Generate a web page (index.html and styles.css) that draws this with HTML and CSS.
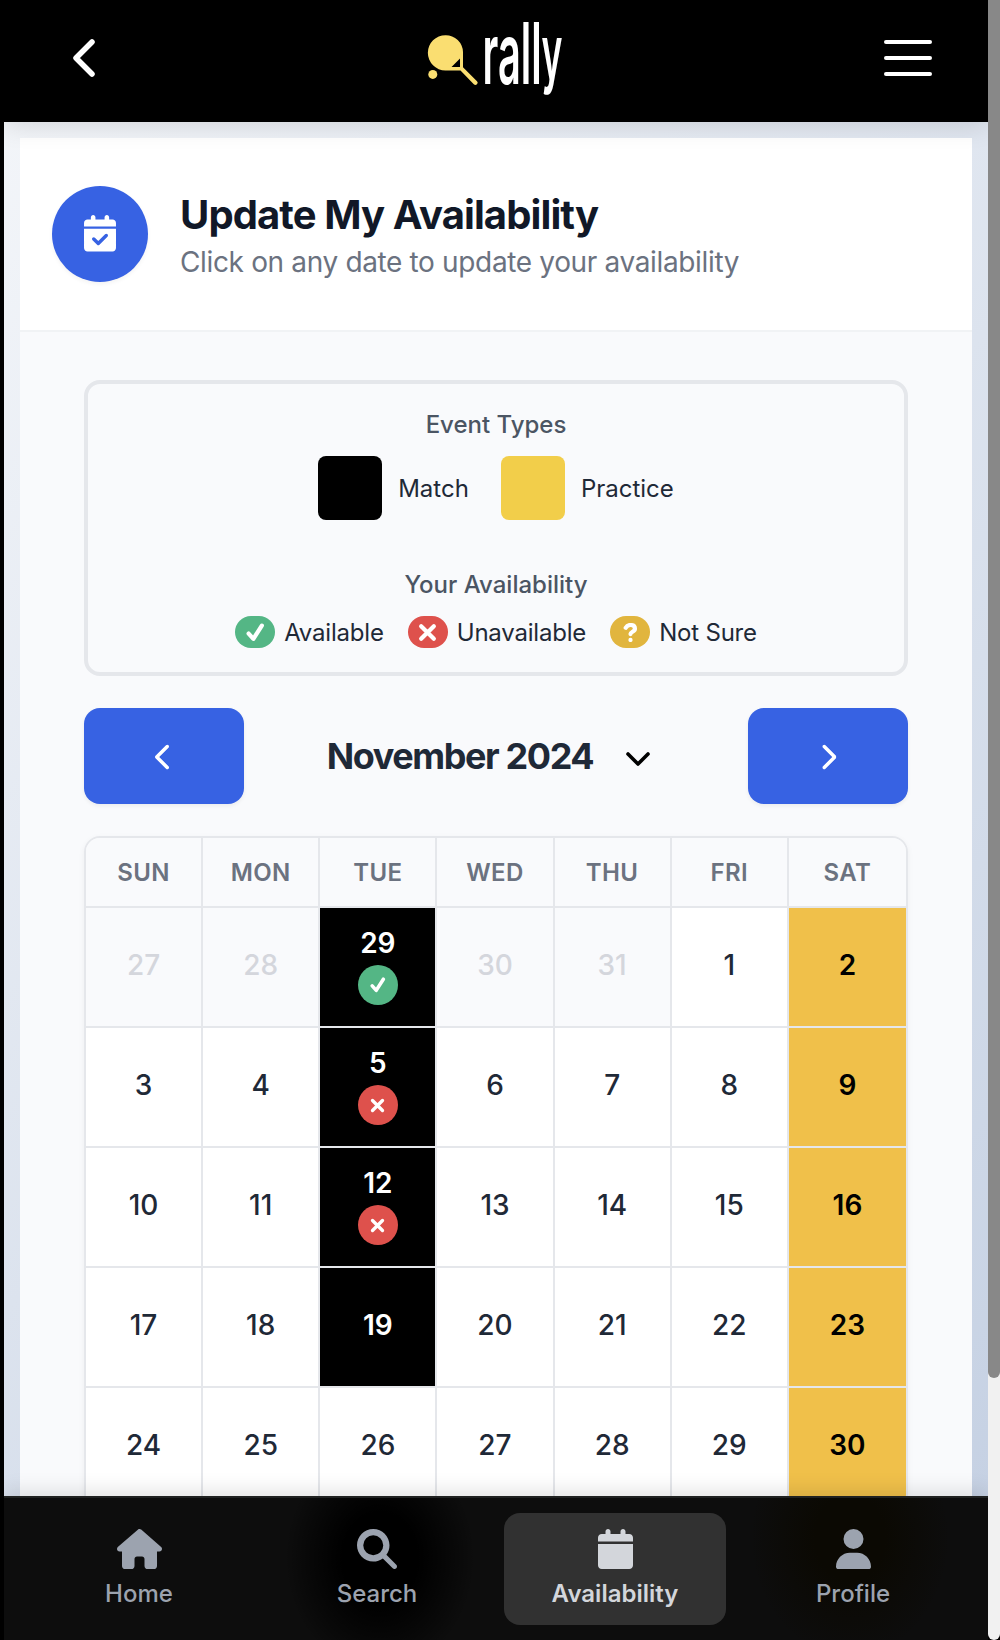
FILE: index.html
```html
<!DOCTYPE html>
<html lang="en">
<head>
<meta charset="utf-8">
<title>Rally – Update My Availability</title>
<link rel="stylesheet" href="styles.css">
</head>
<body>
<svg class="sprite" aria-hidden="true">
  <symbol id="chev" viewBox="0 0 320 512"><path d="M9.4 233.4c-12.5 12.5-12.5 32.8 0 45.3l192 192c12.5 12.5 32.8 12.5 45.3 0s12.5-32.8 0-45.3L77.3 256 246.6 86.6c12.5-12.5 12.5-32.8 0-45.3s-32.8-12.5-45.3 0l-192 192z"/></symbol>
</svg>
<div class="screen">
  <div class="page">
    <header class="topbar">
      <svg class="back" viewBox="0 0 22 38"><path d="M19 3 3 19l16 16"/></svg>
      <svg class="logo" viewBox="0 0 140 84">
        <path class="racket" fill-rule="evenodd" d="M18.500 15.200A17.200 17.200 0 0 1 36 32V47.300L50 61.200A2.200 2.200 0 0 1 46.800 64.300L33.500 50.500H18.500A17.400 17.400 0 0 1 18.500 15.200ZM24.500 47H33V38.500Z"/>
        <circle class="racket" cx="5.800" cy="54.400" r="4.500"/>
        <text x="55.500" y="63.500" textLength="80" lengthAdjust="spacingAndGlyphs">rall<tspan class="tail" dy="-5">y</tspan></text>
      </svg>
      <div class="burger"><span></span><span></span><span></span></div>
    </header>
    <main class="card">
      <section class="intro">
        <div class="intro-icon"><svg viewBox="0 0 448 512"><path d="M128 0c17.700 0 32 14.300 32 32v32h128V32c0-17.700 14.300-32 32-32s32 14.300 32 32v32h48c26.500 0 48 21.500 48 48v48H0v-48C0 85.500 21.500 64 48 64h48V32c0-17.700 14.300-32 32-32zM0 192h448v272c0 26.500-21.500 48-48 48H48c-26.500 0-48-21.500-48-48V192zm329 113c9.400-9.400 9.400-24.600 0-33.900s-24.600-9.400-33.900 0l-95 95-47-47c-9.400-9.400-24.600-9.400-33.900 0s-9.400 24.600 0 33.900l64 64c9.400 9.400 24.600 9.400 33.900 0L329 305z"/></svg></div>
        <div>
          <h1>Update My Availability</h1>
          <p>Click on any date to update your availability</p>
        </div>
      </section>
      <section class="content">
        <div class="legend">
          <h2>Event Types</h2>
          <div class="types">
            <div class="type"><i class="swatch match"></i><span>Match</span></div>
            <div class="type"><i class="swatch practice"></i><span>Practice</span></div>
          </div>
          <h2 class="second">Your Availability</h2>
          <div class="statuses">
            <div class="status"><i class="pill green"><svg viewBox="0 0 18 18"><path d="m2.500 10 4.500 5L15 2.500"/></svg></i><span>Available</span></div>
            <div class="status"><i class="pill red"><svg viewBox="0 0 18 18"><path d="m3 3 12 12M15 3 3 15"/></svg></i><span>Unavailable</span></div>
            <div class="status"><i class="pill amber"><svg viewBox="0 0 18 18"><path d="M4.500 4.500C6.500.8 13.200 1 13.200 5.400c0 3-4.200 2.700-4.200 5.100M9 16v.1"/></svg></i><span>Not Sure</span></div>
          </div>
        </div>
        <div class="switcher">
          <button class="step" aria-label="Previous month"><svg viewBox="0 0 320 512"><use href="#chev"/></svg></button>
          <div class="month"><span>November 2024</span><svg viewBox="0 0 24 14"><path d="m2 2 10 10L22 2"/></svg></div>
          <button class="step next" aria-label="Next month"><svg viewBox="0 0 320 512"><use href="#chev"/></svg></button>
        </div>
        <div class="calendar">
          <div class="wd">SUN</div><div class="wd">MON</div><div class="wd">TUE</div><div class="wd">WED</div><div class="wd">THU</div><div class="wd">FRI</div><div class="wd">SAT</div>
          <div class="day out">27</div><div class="day out">28</div><div class="day game marked">29<i class="dot green"><svg viewBox="0 0 18 18"><path d="m2.500 10 4.500 5L15 2.500"/></svg></i></div><div class="day out">30</div><div class="day out">31</div><div class="day">1</div><div class="day drill">2</div>
          <div class="day">3</div><div class="day">4</div><div class="day game marked">5<i class="dot red"><svg viewBox="0 0 18 18"><path d="m3 3 12 12M15 3 3 15"/></svg></i></div><div class="day">6</div><div class="day">7</div><div class="day">8</div><div class="day drill">9</div>
          <div class="day">10</div><div class="day">11</div><div class="day game marked">12<i class="dot red"><svg viewBox="0 0 18 18"><path d="m3 3 12 12M15 3 3 15"/></svg></i></div><div class="day">13</div><div class="day">14</div><div class="day">15</div><div class="day drill">16</div>
          <div class="day">17</div><div class="day">18</div><div class="day game">19</div><div class="day">20</div><div class="day">21</div><div class="day">22</div><div class="day drill">23</div>
          <div class="day">24</div><div class="day">25</div><div class="day">26</div><div class="day">27</div><div class="day">28</div><div class="day">29</div><div class="day drill">30</div>
        </div>
      </section>
    </main>
    <nav class="tabs">
      <a class="tab"><svg viewBox="0 0 576 512"><path d="M575.800 255.500c0 18-15 32.100-32 32.100h-32l.7 160.200c0 2.700-.2 5.400-.5 8.100V472c0 22.100-17.900 40-40 40H392c-22.100 0-40-17.900-40-40v-88c0-17.700-14.300-32-32-32h-64c-17.700 0-32 14.300-32 32v88c0 22.100-17.900 40-40 40h-80c-22.100 0-40-17.900-40-40V287.600H32c-18 0-32-14-32-32.100 0-9 3-17 10-24L266.400 8c7-7 15-8 22-8s15 2 21 7l255.400 224.500c8 7 12 15 11 24z"/></svg><span>Home</span></a>
      <a class="tab"><svg viewBox="0 0 512 512"><path d="M416 208c0 45.900-14.900 88.300-40 122.700l126.600 126.700c12.500 12.500 12.500 32.800 0 45.300s-32.800 12.500-45.300 0L330.700 376c-34.400 25.200-76.800 40-122.700 40C93.100 416 0 322.900 0 208S93.100 0 208 0s208 93.100 208 208zM208 336a128 128 0 1 0 0-256 128 128 0 1 0 0 256z"/></svg><span>Search</span></a>
      <a class="tab active"><svg viewBox="0 0 448 512"><path d="M96 32v32H48C21.500 64 0 85.500 0 112v48h448v-48c0-26.500-21.500-48-48-48h-48V32c0-17.700-14.300-32-32-32s-32 14.300-32 32v32H160V32c0-17.700-14.300-32-32-32S96 14.300 96 32zm352 160H0v272c0 26.500 21.500 48 48 48h352c26.500 0 48-21.500 48-48V192z"/></svg><span>Availability</span></a>
      <a class="tab"><svg viewBox="0 0 448 512"><path d="M224 256a128 128 0 1 0 0-256 128 128 0 1 0 0 256zm-45.700 48C79.800 304 0 383.800 0 482.300 0 498.700 13.300 512 29.700 512h388.600c16.400 0 29.700-13.300 29.700-29.700C448 383.800 368.200 304 269.700 304h-91.400z"/></svg><span>Profile</span></a>
    </nav>
  </div>
  <div class="scrollbar"><div class="thumb"></div></div>
</div>
</body>
</html>
```
FILE: styles.css
```css
* { box-sizing: border-box; }
body { margin: 0; font-family: Inter, "Liberation Sans", sans-serif; color: #1f2937; }
h1, h2, p { margin: 0; }
i { font-style: normal; }
.sprite { display: none; }

.screen { display: flex; height: 1640px; overflow: hidden; background: #000; padding-left: 4px; }
.page { display: flex; flex-direction: column; width: 984px; height: 1640px; background: linear-gradient(135deg, #f5f7fa, #c3cfe2); }
.scrollbar { width: 12px; background: #f1f1f1; border-radius: 0 0 6px 6px; }
.thumb { height: 1378px; background: #888; border-radius: 0 0 6px 6px; }

.topbar { flex: none; height: 122px; padding: 0 56px 6px 69px; display: flex; align-items: center; justify-content: space-between; background: #000; box-shadow: 0 4px 24px rgba(0, 0, 0, .12); clip-path: inset(0 0 -40px 0); }
.back { width: 22px; height: 38px; fill: none; stroke: #fff; stroke-width: 5.500; stroke-linecap: round; stroke-linejoin: round; }
.logo { width: 140px; height: 84px; margin-left: 15px; margin-top: 8px; overflow: visible; }
.logo text { font-size: 85px; font-weight: 600; fill: #fff; }
.logo .tail { font-size: 76px; }
.racket { fill: #fade71; }
.burger { display: flex; flex-direction: column; gap: 12px; }
.burger span { width: 48px; height: 4px; border-radius: 2px; background: #fff; }

.card { flex: none; margin: 16px 16px 0; height: 1358px; overflow: hidden; background: #f9fafc; }
.intro { height: 194px; padding: 48px 32px 0; display: flex; gap: 32px; background: #fff; border-bottom: 2px solid #f1f3f5; }
.intro-icon { width: 96px; height: 96px; border-radius: 50%; background: #3762e3; display: flex; align-items: center; justify-content: center; box-shadow: 0 2px 4px rgba(0, 0, 0, .05); }
.intro-icon svg { width: 32px; height: 36.500px; fill: #fff; margin-top: -1px; }
h1 { font-size: 40px; line-height: 56px; padding-top: 1px; margin-bottom: -1px; font-weight: 700; letter-spacing: -.9px; color: #111827; }
.intro p { font-size: 28px; line-height: 40px; letter-spacing: -.35px; color: #6b7280; }

.content { padding: 48px 64px 0; }
.legend { height: 296px; border: 4px solid #e5e7eb; border-radius: 16px; padding-top: 23px; text-align: center; font-size: 24px; }
.legend h2 { font-size: 24px; line-height: 36px; font-weight: 500; color: #4b5563; }
.types { display: flex; justify-content: center; gap: 32px; margin-top: 13px; }
.type { display: flex; align-items: center; gap: 16px; }
.swatch { width: 64px; height: 64px; border-radius: 8px; }
.match { background: #000; }
.practice { background: #f2ce4a; }
.legend .second { margin-top: 47px; }
.statuses { display: flex; justify-content: center; gap: 24px; margin-top: 13px; }
.status { display: flex; align-items: center; gap: 9px; letter-spacing: -.2px; }
.pill { width: 40px; height: 32px; border-radius: 16px; display: flex; align-items: center; justify-content: center; }
.pill svg, .dot svg { fill: none; stroke: #fff; stroke-width: 4; stroke-linecap: round; stroke-linejoin: round; }
.pill svg { width: 19px; height: 19px; }
.green { background: #54b685; }
.red { background: #de514c; }
.amber { background: #e1b53e; }

.switcher { display: flex; align-items: center; justify-content: space-between; margin-top: 32px; height: 96px; }
.step { width: 160px; height: 96px; border: 0; border-radius: 16px; background: #3762e3; display: flex; align-items: center; justify-content: center; padding: 0; box-shadow: 0 2px 4px rgba(0, 0, 0, .06); }
.step svg { width: 17.500px; height: 28px; fill: #fff; margin-top: 2px; }
.next svg { transform: scaleX(-1); }
.month { display: flex; align-items: center; gap: 33px; padding-right: 15px; }
.month span { font-size: 36px; font-weight: 700; letter-spacing: -1.4px; }
.month svg { width: 24px; height: 14px; margin-top: 5px; fill: none; stroke: #000; stroke-width: 3.600; stroke-linecap: round; stroke-linejoin: round; }

.calendar { margin-top: 32px; border: 2px solid #e5e7eb; border-radius: 16px; overflow: hidden; display: grid; grid-template-columns: repeat(7, 1fr); grid-template-rows: 70px; grid-auto-rows: 120px; box-shadow: 0 2px 6px rgba(0, 0, 0, .05); }
.wd, .day { border-right: 2px solid #e5e7eb; border-bottom: 2px solid #e5e7eb; display: flex; flex-direction: column; align-items: center; justify-content: center; }
.calendar > :nth-child(7n) { border-right: 0; }
.wd { background: #f9fafc; font-size: 24px; font-weight: 600; letter-spacing: .4px; color: #6b7280; }
.day { background: #fff; font-size: 28px; line-height: 40px; font-weight: 500; padding-bottom: 4px; }
.marked { padding-bottom: 6px; }
.out { background: #f9fafc; color: #d4d6dc; }
.game { background: #000; color: #fff; font-weight: 600; }
.drill { background: #f0c04a; color: #000; font-weight: 600; }
.dot { width: 40px; height: 40px; border-radius: 50%; display: flex; align-items: center; justify-content: center; margin-top: 2px; }
.dot svg { width: 16px; height: 16px; }
.dot.red svg { width: 15px; height: 15px; }

.tabs { flex: none; position: relative; height: 144px; padding: 15px 24px; display: flex; gap: 16px; border-top: 2px solid #202221; background: radial-gradient(ellipse 95px 115px at 376px 60px, #000 40%, transparent), radial-gradient(ellipse 100px 120px at 846px 40px, #0b0903 35%, transparent), #0d0d0d; box-shadow: 0 -4px 20px rgba(0, 0, 0, .12); clip-path: inset(-40px 0 0 0); }
.tab { flex: 1; height: 112px; padding-top: 16px; border-radius: 16px; display: flex; flex-direction: column; align-items: center; color: #9ca3af; font-size: 24px; line-height: 32px; font-weight: 500; }
.tab svg { height: 40px; fill: currentColor; }
.tab span { margin-top: 9px; }
.active { background: #313131; color: #d3d6db; font-weight: 600; }
```
